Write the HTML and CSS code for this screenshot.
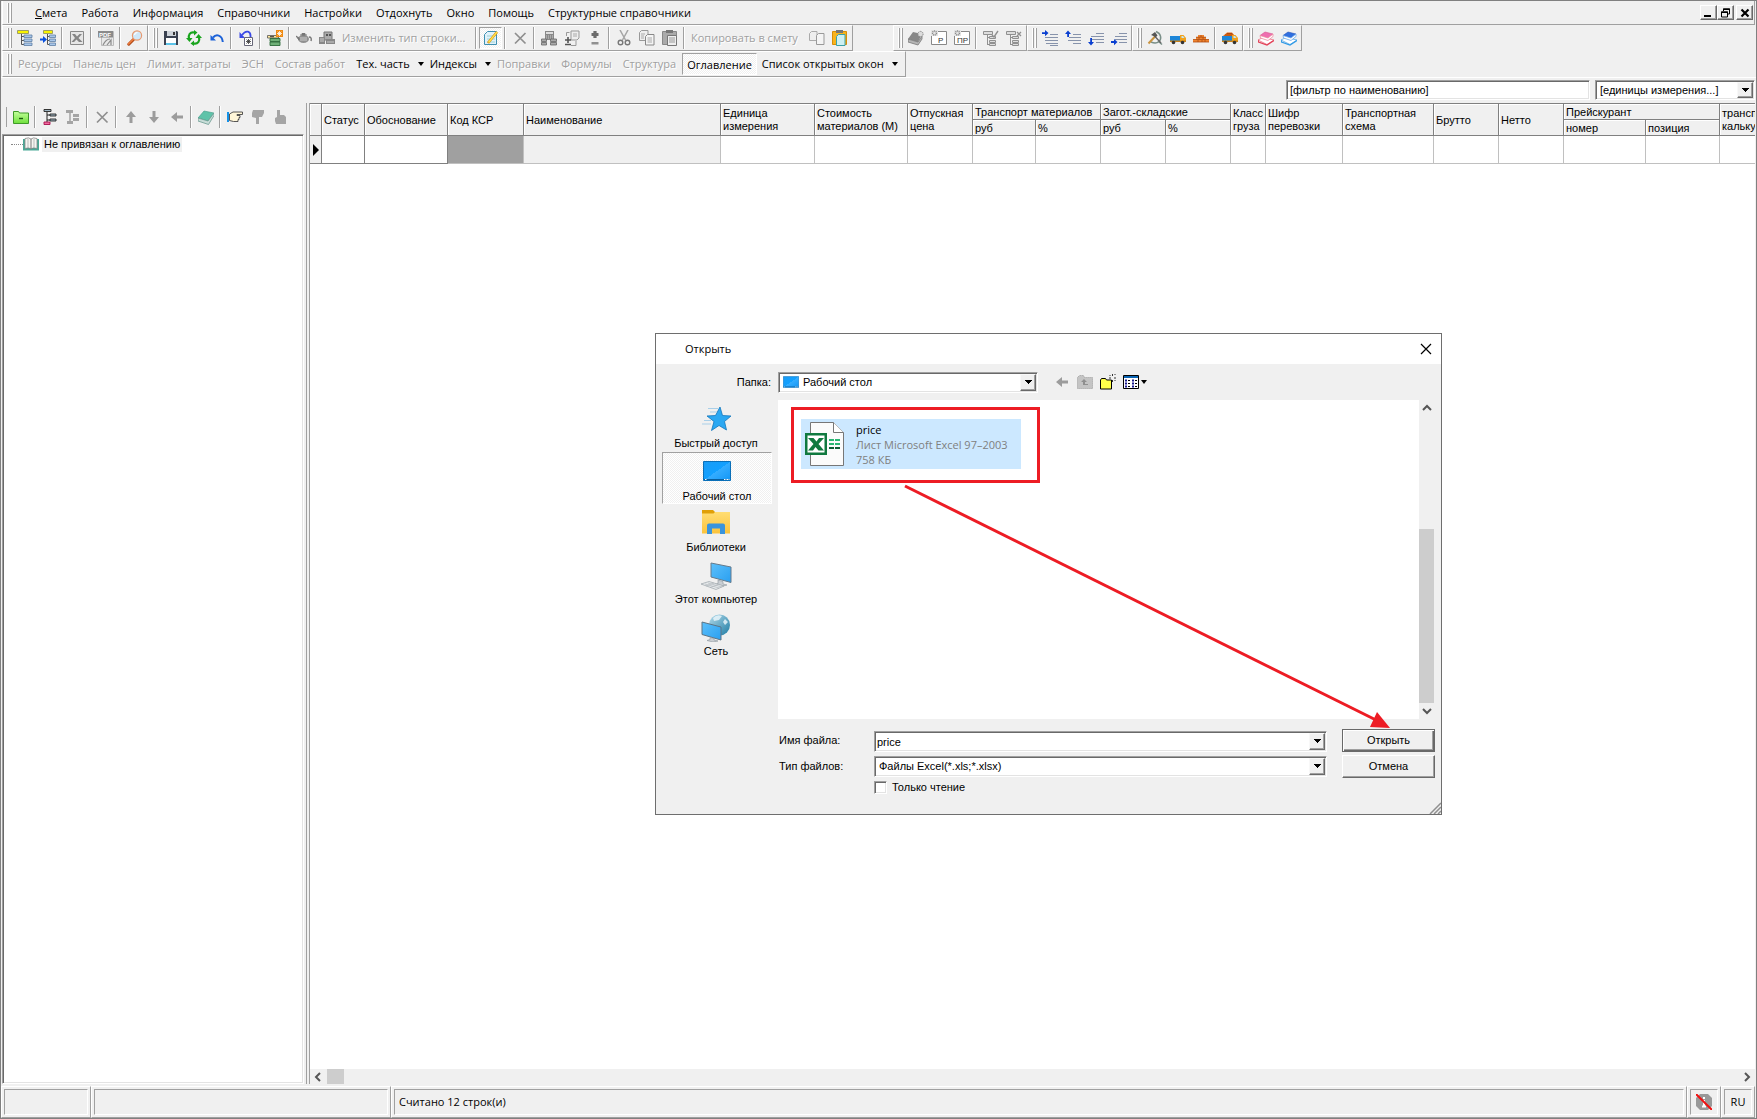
FILE: index.html
```html
<!DOCTYPE html>
<html lang="ru">
<head>
<meta charset="utf-8">
<title>Смета</title>
<link rel="stylesheet" href="styles.css">
</head>
<body>
<svg class="sprite" aria-hidden="true">
  <defs>
    <linearGradient id="gBlue" x1="0" y1="0" x2="1" y2="1"><stop offset="0" stop-color="#1a9cf5"/><stop offset=".5" stop-color="#12a0ff"/><stop offset=".5" stop-color="#35adff"/><stop offset="1" stop-color="#1296f5"/></linearGradient>
    <linearGradient id="gSky" x1="0" y1="0" x2="1" y2="1"><stop offset="0" stop-color="#5cc0fb"/><stop offset="1" stop-color="#2a9ff0"/></linearGradient>
    <linearGradient id="gFolder" x1="0" y1="0" x2="0" y2="1"><stop offset="0" stop-color="#ffdd73"/><stop offset="1" stop-color="#fbc33c"/></linearGradient>
    <linearGradient id="gGlobe" x1="0" y1="0" x2="1" y2="1"><stop offset="0" stop-color="#b5dcec"/><stop offset="1" stop-color="#1d7ba3"/></linearGradient>
    <linearGradient id="gGreen" x1="0" y1="0" x2="0" y2="1"><stop offset="0" stop-color="#c4ff9c"/><stop offset="1" stop-color="#6fe03c"/></linearGradient>
  </defs>
  <symbol id="i-tree" viewBox="0 0 16 16"><path d="M.500.500h11v3H.500z" fill="#f8f400" stroke="#8a8a5a" stroke-width=".8"/><path d="M4.500 4v10.500M4.500 6.500h3M4.500 10.500h3M4.500 14.500h3" fill="none" stroke="#555"/><path d="M7 5h8v2.500H7zM7 9h8v2.500H7zM7 13h8v2.500H7z" fill="#a9c7ea" stroke="#5e7fa5" stroke-width=".8"/></symbol>
  <symbol id="i-tree-in" viewBox="0 0 16 16"><path d="M3.500.500h9v3h-9z" fill="#f8f400" stroke="#8a8a5a" stroke-width=".8"/><path d="M7.500 4v10.500M7.500 6.500h2M7.500 10.500h2M7.500 14.500h2" fill="none" stroke="#555"/><path d="M9.500 5h6v2.500h-6zM9.500 9h6v2.500h-6zM9.500 13h6v2.500h-6z" fill="#a9c7ea" stroke="#5e7fa5" stroke-width=".8"/><path d="M0 8.500h3V6l4 3.500L3 13v-2.500H0z" fill="#0a50dd"/></symbol>
  <symbol id="i-excel" viewBox="0 0 16 16"><path d="M1.500 1.500h13v13h-13z" fill="#e6e6e6" stroke="#8a8a8a"/><path d="M3 4h3l2 2.500L10.500 4H13L9.500 8l4 4H10L7.500 9.500 5 12H2.500L6 8z" fill="#858585"/></symbol>
  <symbol id="i-zoom" viewBox="0 0 16 16"><path d="M1.800 14.200 6.500 9.500" stroke="#b04a18" stroke-width="3" stroke-linecap="round"/><path d="M1.500 13.800 6.500 9" stroke="#ec7a3c" stroke-width="1.600" stroke-linecap="round"/><circle cx="10" cy="5.500" r="4.600" fill="#cfe8fa" stroke="#e89a70" stroke-width="1.200"/><path d="M7.500 5a3 3 0 0 1 3-2.500" fill="none" stroke="#fff" stroke-width="1.200"/></symbol>
  <symbol id="i-save" viewBox="0 0 16 16"><path d="M1 1h13l1 1v13H1z" fill="#3a4150"/><path d="M4 1h9v5H4z" fill="#cfd4da"/><path d="M10 2h2v3h-2z" fill="#333"/><path d="M3 8h10v7H3z" fill="#fff"/><path d="M3 13h10v2H3z" fill="#5cc3e8"/></symbol>
  <symbol id="i-refresh" viewBox="0 0 16 16"><path d="M8.500 2.500C4 1.500 2 5 3 9M7.500 13.500c4.500 1 6.500-2.500 5.500-6.500" fill="none" stroke="#19a41d" stroke-width="2.200"/><path d="M0 8h6.500l-3 4zM16 8H9.500l3-4zM8 5.500V0l3.500 2.500zM8 10.500V16l-3.500-2.500z" fill="#19a41d"/></symbol>
  <symbol id="i-undo" viewBox="0 0 16 16"><path d="M4 7.500C7 4 13 4.500 13.800 12" fill="none" stroke="#1c62d8" stroke-width="2"/><path d="M1.500 5v5.500H7z" fill="#1c62d8"/></symbol>
  <symbol id="i-undo-page" viewBox="0 0 16 16"><path d="M4 5C8-.5 13 1 12.500 7" fill="none" stroke="#3a49e6" stroke-width="1.800"/><path d="M1.500 2v6H7z" fill="#3a49e6"/><path d="M6.500 7.500h8v8h-8z" fill="#fff" stroke="#667"/><path d="m8.500 9.500 4 4m0-4-4 4m2-4.500v5m-2.500-2.500h5" stroke="#333" stroke-width=".8"/></symbol>
  <symbol id="i-stack" viewBox="0 0 16 16"><path d="M.5 5.500h11V8H.500z" fill="#ffe9a0" stroke="#555" stroke-width=".8"/><path d="M3 8.500h10v3H3zM3 12h10v3.500H3z" fill="#6fb077" stroke="#2d6b3a" stroke-width=".9"/><path d="M3 6.700h4" stroke="#333"/><path d="M9 0h7v7H9z" fill="#f08a10"/><path d="M12.500 1v5M10 3.500h5M10.700 1.700l3.600 3.600m0-3.600-3.600 3.600" stroke="#fff" stroke-width=".8"/></symbol>
  <symbol id="i-kettle" viewBox="0 0 16 16"><ellipse cx="7.500" cy="9" rx="5.500" ry="4" fill="#909090"/><path d="M0 6l3 2v2zM4 5h7M6 3.500h3v1.500H6z" fill="#777" stroke="#777"/><path d="M13 7q3 0 2 4" fill="none" stroke="#777" stroke-width="1.400"/><path d="M4 8h7M4 10h7" stroke="#ccc"/></symbol>
  <symbol id="i-machine" viewBox="0 0 16 16"><path d="M5 2h8v8H5z" fill="#aaa" stroke="#777"/><path d="M7 4h2v2H7zm3 0h2v2h-2z" fill="#555"/><path d="M0 7h6v7H0zM7 9h9v5H7z" fill="#888"/><path d="M1 9h4M1 11h4M8 12h7" stroke="#ccc"/></symbol>
  <symbol id="i-note" viewBox="0 0 16 16"><path d="M4.500 1.500h9v13h-12v-10z" fill="#dff1fb" stroke="#3f8fb0"/><path d="M4 6h8M4 9h8M4 12h8" stroke="#8cc" stroke-width=".8"/><path d="M5 13 14 2" stroke="#d98a10" stroke-width="2.600"/><path d="M5.500 12.500 14 2" stroke="#ffe44a" stroke-width="1.400"/></symbol>
  <symbol id="i-x" viewBox="0 0 16 16"><path d="m3 3 10.500 10.500m0-10.500L3 13.500" stroke="#8f8f8f" stroke-width="1.700"/></symbol>
  <symbol id="i-calc" viewBox="0 0 16 16"><path d="M4 1h9v9H4z" fill="#888"/><path d="M5 2h7v2H5z" fill="#ddd"/><path d="M5 6h7M5 8h7" stroke="#ccc" stroke-dasharray="1 1"/><path d="M.5 9h5v2.500h-5zM.500 12.500h5V15h-5zM9.500 9h6v2.500h-6zM9.500 12.500h6V15h-6z" fill="#aaa" stroke="#666" stroke-width=".8"/></symbol>
  <symbol id="i-page-plus" viewBox="0 0 16 16"><path d="M7 1h8v7l-2 2H7z" fill="#eee" stroke="#999"/><path d="M2.500 6V2.500h3M7 15.500h5V11" fill="none" stroke="#999"/><path d="M9 4h4M9 6h4" stroke="#aaa"/><path d="M4 7v6M1 10h6M1 14.500h6" stroke="#555" stroke-width="1.600"/></symbol>
  <symbol id="i-plusminus" viewBox="0 0 16 16"><path d="M8 1v7M4.500 4.500h7" stroke="#6c6c6c" stroke-width="3.200"/><path d="M4.500 12h7v2.500h-7z" fill="#909090"/></symbol>
  <symbol id="i-cut" viewBox="0 0 16 16"><path d="M4 0l5.500 10M12 0 6.500 10" stroke="#a5a5a5" stroke-width="1.500"/><circle cx="4.500" cy="12.500" r="2.300" fill="none" stroke="#777" stroke-width="1.400"/><circle cx="11.500" cy="12.500" r="2.300" fill="none" stroke="#777" stroke-width="1.400"/></symbol>
  <symbol id="i-copy" viewBox="0 0 16 16"><path d="M.5 2.500 2.500.500H9v10H.500z" fill="#eee" stroke="#999"/><path d="M6.500 6.500l2-2H15v10.500H6.500z" fill="#f4f4f4" stroke="#888"/><path d="M2 4h4M2 6h3M2 8h3M8.500 8H13M8.500 10H13M8.500 12H13" stroke="#aaa"/></symbol>
  <symbol id="i-paste" viewBox="0 0 16 16"><path d="M.500 1.500h14v13H.500z" fill="#aaa" stroke="#888"/><path d="M4 0h7v3H4z" fill="#777"/><path d="M5.500 5.500h9v10h-9z" fill="#eee" stroke="#777"/><path d="M7 8h6M7 10h6M7 12h6" stroke="#999"/></symbol>
  <symbol id="i-copy2" viewBox="0 0 16 16"><path d="M.500 3.500 2.500 1.500H8v9H.500z" fill="#eee" stroke="#aaa"/><path d="M7.500 5.500l2-2H15v11H7.500z" fill="#f4f4f4" stroke="#999"/></symbol>
  <symbol id="i-paste2" viewBox="0 0 16 16"><path d="M.500 1.500h14v13H.500z" fill="#f8b31c" stroke="#d98d06"/><path d="M4 0h7v3H4z" fill="#777"/><path d="M4.500 6.500l2-2H13v11H4.500z" fill="#cdeff2" stroke="#3aa0a8"/></symbol>
  <symbol id="i-book-gear" viewBox="0 0 16 16"><path d="M0 9 5 2l9 2-4 8z" fill="#888"/><path d="m0 9 10 3 4-6v3l-4 6-10-3z" fill="#b5b5b5" stroke="#777" stroke-width=".8"/><circle cx="12.500" cy="4" r="2.600" fill="#ddd" stroke="#888" stroke-dasharray="1.500 .8"/></symbol>
  <symbol id="i-tree-check" viewBox="0 0 16 16"><path d="M.500 1.500h9v3h-9zM6.500 6.500h6v2h-6zM6.500 10.500h6v2h-6zM6.500 13.500h6v2h-6z" fill="#ddd" stroke="#909090"/><path d="M4.500 5v10M4.500 7.500h2M4.500 14.500h2" stroke="#909090"/><path d="m9 5 2 2 4-6" fill="none" stroke="#909090" stroke-width="1.400"/></symbol>
  <symbol id="i-tree-x" viewBox="0 0 16 16"><path d="M.500 1.500h9v3h-9zM6.500 6.500h6v2h-6zM6.500 10.500h6v2h-6zM6.500 13.500h6v2h-6z" fill="#ddd" stroke="#909090"/><path d="M4.500 5v10M4.500 7.500h2M4.500 14.500h2" stroke="#909090"/><path d="m11 2 4 4m0-4-4 4" stroke="#909090" stroke-width="1.300"/></symbol>
  <symbol id="i-line-r" viewBox="0 0 16 16"><path d="M8 4.500h8M3 7.500h13M3 10.500h13M4 13.500h12M8 15.500h8" stroke="#8793ab"/><path d="M0 2.200h3V0l3.500 3L3 6.200V4H0z" fill="#0a3fd0"/></symbol>
  <symbol id="i-line-u" viewBox="0 0 16 16"><path d="M8 4.500h8M4 7.500h12M3 10.500h13M8 13.500h8" stroke="#8793ab"/><path d="M2.200 7V4H0L3 .500 6 4H4v3z" fill="#0a3fd0"/></symbol>
  <symbol id="i-line-d" viewBox="0 0 16 16"><path d="M8 3.500h8M3 6.500h13M3 9.500h13M8 12.500h8" stroke="#8793ab"/><path d="M2.200 8v4H0l3 3.500L6 12H4V8z" fill="#0a3fd0"/></symbol>
  <symbol id="i-line-dr" viewBox="0 0 16 16"><path d="M8 3.500h8M4 6.500h12M4 9.500h12M8 12.500h8" stroke="#8793ab"/><path d="M0 11h3V9l3.500 3L3 15.200V13H0z" fill="#0a3fd0"/></symbol>
  <symbol id="i-hammer" viewBox="0 0 16 16"><path d="M9 1.500c5 2 6 7 3 10-2 1.800-5 1.800-8 .5M11 11l4 3.500" fill="none" stroke="#7a8f88" stroke-width="1.500"/><path d="M1.500 13.500 8.500 6" stroke="#c99440" stroke-width="2"/><path d="M8 6.500 14 13" stroke="#666" stroke-width="1.400"/><path d="m4 5 4-3 2.500 3.500-2 2-2-1.500z" fill="#555"/></symbol>
  <symbol id="i-truck" viewBox="0 0 16 16"><path d="M0 6h10v5H0z" fill="#1d86d8"/><path d="M10 5h3.500L16 8v4h-6z" fill="#f0a21c"/><path d="M11.500 6H13l1.500 2h-3z" fill="#bfe4f7"/><path d="M0 10.500h16V12H0z" fill="#c98218"/><circle cx="3.500" cy="12.500" r="1.800" fill="#333"/><circle cx="12.500" cy="12.500" r="1.800" fill="#333"/></symbol>
  <symbol id="i-bricks" viewBox="0 0 16 16"><path d="M0 9.500h3V7h2V5h6v2h2v2.500h3V12H0z" fill="#ee8430"/><path d="M0 9.500h16M3 7.200h10M5 10v2M9 10v2M12 10v2M8 5v2M6 7v2M10 7v2M0 12h16" stroke="#b04c10" stroke-width=".8"/></symbol>
  <symbol id="i-truck-load" viewBox="0 0 16 16"><path d="M1 6l4-3.500h5L13 6z" fill="#e06a1c"/><path d="M3 5h8M5 3.500h5" stroke="#a84408" stroke-width=".8"/><path d="M0 6h10v5H0z" fill="#1d86d8"/><path d="M10 5h3.500L16 8v4h-6z" fill="#f0a21c"/><path d="M11.500 6H13l1.500 2h-3z" fill="#bfe4f7"/><path d="M0 10.500h16V12H0z" fill="#c98218"/><circle cx="3.500" cy="12.500" r="1.800" fill="#333"/><circle cx="12.500" cy="12.500" r="1.800" fill="#333"/></symbol>
  <symbol id="i-books-red" viewBox="0 0 16 16"><path d="M0 10 5 7.500 16 10l-7 4.500z" fill="#fff" stroke="#ef6b80" stroke-width=".8"/><path d="m0 10 .500 2L9 15l7-4.500" fill="none" stroke="#e23f55" stroke-width="1.200"/><path d="m2 5.500 5-3.500 8 2-5 4z" fill="#ee6fb0" stroke="#d9558f" stroke-width=".6"/><path d="m2 5.500.5 2.500L10 10.500l5-4V4l-5 4z" fill="#fff" stroke="#ef8aa0" stroke-width=".8"/></symbol>
  <symbol id="i-books-blue" viewBox="0 0 16 16"><path d="M0 10 5 7.500 16 10l-7 4.500z" fill="#fff" stroke="#55a7e8" stroke-width=".8"/><path d="m0 10 .500 2L9 15l7-4.500" fill="none" stroke="#2f9ae6" stroke-width="1.200"/><path d="m2 5.500 5-3.500 8 2-5 4z" fill="#2f6fe0" stroke="#2350b5" stroke-width=".6"/><path d="m2 5.500.5 2.500L10 10.500l5-4V4l-5 4z" fill="#fff" stroke="#6aa8ea" stroke-width=".8"/></symbol>
  <symbol id="i-folder-minus" viewBox="0 0 16 16"><path d="M.500 14.500v-12h5l1 1.500h9v10.500z" fill="url(#gGreen)" stroke="#3f9a28"/><path d="M6 9.500h4" stroke="#1c5c10" stroke-width="1.400"/></symbol>
  <symbol id="i-node-add" viewBox="0 0 16 16"><path d="M2 .5h7v2H2zM8 5h6v2H8zM8 10h6v2H8z" fill="#9fb6c4" stroke="#222" stroke-width=".9"/><path d="M5 3v10M5 6h3M5 11h3" stroke="#222" fill="none"/><path d="M2 13h6v2.500H2z" fill="#f06aa0" stroke="#a8104c" stroke-width=".9"/></symbol>
  <symbol id="i-node-off" viewBox="0 0 16 16"><path d="M1 1h7v3H1zM8 5h6v3H8zM8 9h6v3H8zM2 12h6v3H2z" fill="#a5a5a5"/><path d="M5 3v10" stroke="#a5a5a5" stroke-width="1.500"/></symbol>
  <symbol id="i-up" viewBox="0 0 16 16"><path d="M6.500 14V8H3l5-6 5 6H9.500v6z" fill="#9c9c9c"/></symbol>
  <symbol id="i-down" viewBox="0 0 16 16"><path d="M6.500 2v6H3l5 6 5-6H9.500V2z" fill="#9c9c9c"/></symbol>
  <symbol id="i-left" viewBox="0 0 16 16"><path d="M14 6.500H8V3L2 8l6 5V9.500h6z" fill="#9c9c9c"/></symbol>
  <symbol id="i-book" viewBox="0 0 16 16"><path d="M0 9 6 2l10 2-6 8z" fill="#5fc3a9" stroke="#3f9a88" stroke-width=".6"/><path d="m0 9 10 3 6-8v2.500L10.500 15.500 0 12z" fill="#c8ddd8" stroke="#6c9a92" stroke-width=".8"/></symbol>
  <symbol id="i-hand-r" viewBox="0 0 16 16"><path d="M0 3h2v10H0z" fill="#1592e8"/><path d="M2.500 5 6 3h9.500v2.500H10v1h3v2h-1v2h-1v2H6.500l-4-1z" fill="#fff6d8" stroke="#444" stroke-width=".9"/></symbol>
  <symbol id="i-hand-d" viewBox="0 0 16 16"><path d="M3 1h11v3l-2 4H9v7H6V9L2 8V4z" fill="#a5a5a5"/></symbol>
  <symbol id="i-hand-u" viewBox="0 0 16 16"><path d="M3 15h10V8l-2-2H7V1H4v7L2 9v3z" fill="#a5a5a5"/></symbol>
  <symbol id="i-book-open" viewBox="0 0 16 14"><path d="M0 2h16v11.500H0z" fill="#4aa896"/><path d="M2 1.500Q6 0 8 2q2-2 6-.5v10q-4-1.500-6 .5-2-2-6-.5z" fill="#f6f6f2" stroke="#888" stroke-width=".8"/><path d="M8 2v10" stroke="#777"/><path d="M5 2v9M11 2v9" stroke="#bbb"/></symbol>
  <symbol id="i-dlg-up" viewBox="0 0 16 16"><path d="M.500 14.500v-11l2-2h4l1 2h8v11z" fill="#c4c4c4" stroke="#9c9c9c" stroke-dasharray="1 1"/><path d="M6 11V8H4l3-3 3 3H8v2h3v1z" fill="#8f8f8f"/></symbol>
  <symbol id="i-dlg-new" viewBox="0 0 16 16"><path d="M.500 15v-9l1-1.500h4l1 1.500h5v9z" fill="#ffff4a" stroke="#000"/><path d="M12.500 0v2M12.500 6v2M9 4h2M14 4h2M9.500 1l1 1M14.500 1l1-1M14.500 6l1 1" stroke="#333"/></symbol>
  <symbol id="i-dlg-view" viewBox="0 0 16 16"><path d="M.500 1.500h15v13H.500z" fill="#fff" stroke="#000"/><path d="M1 2h14v2H1z" fill="#0a64b4"/><path d="M2 6.500h2M2 9.500h2M2 12.500h2M9 6.500h2M9 9.500h2M9 12.500h2" stroke="#1a1a90" stroke-width="1.800"/><path d="M5 6.500h2M5 9.500h2M5 12.500h2M12 6.500h2M12 9.500h2M12 12.500h2" stroke="#000"/></symbol>
  <symbol id="i-screen" viewBox="0 0 28 20"><path d="M.500.500h27v19H.500z" fill="url(#gBlue)" stroke="#0a6fb8"/><path d="M1 18h26v1H1z" fill="#0a5f9e"/><path d="M2 18.500h1.500M21 18.500h1.500M23.500 18.500h1.500M25.500 18.500h1" stroke="#fff"/></symbol>
  <symbol id="i-star" viewBox="0 0 32 26"><path d="M20 1l2.500 8.500 8.500.5-6.500 5.500 2 8.500-7.500-4.500-7.500 5L14 15.500 7 10l8.500-.5z" fill="#2ba8f2" stroke="#1176bd" stroke-width=".8"/><path d="M8 2.500h10M10 6h7M4 14.500h7M2 18h9" stroke="#a9cfe8" stroke-width="1"/></symbol>
  <symbol id="i-lib" viewBox="0 0 28 24"><path d="M0 0h11l2 2v3H0z" fill="#e0a008"/><path d="M0 3.500h11.500L13 2h15v21.500H0z" fill="url(#gFolder)"/><path d="M5 24V15.500a2 2 0 0 1 2-2h14a2 2 0 0 1 2 2V24h-5v-5.500h-8V24z" fill="#3a94dc"/></symbol>
  <symbol id="i-pc" viewBox="0 0 32 28"><path d="M11 1l20 4v15.500L11 15z" fill="url(#gSky)" stroke="#667b8c"/><path d="m18 18 5 1.500v2.500l4 1-6 1.500-6-2 3-1z" fill="#c9ced3" stroke="#8c959c" stroke-width=".6"/><path d="m1 22 8-2.500 15 4.500-8 3.500z" fill="#e7eaec" stroke="#9aa2a8" stroke-width=".7"/><path d="m5 22 14 4M8 21l14 4M6 24l8-3M10 25.500l8-3" stroke="#aab0b5" stroke-width=".6"/></symbol>
  <symbol id="i-net" viewBox="0 0 30 28"><circle cx="18.500" cy="11" r="10.500" fill="url(#gGlobe)"/><path d="M12 4q4-4 9-2l-3 4-5 1zM24 5l3 3-3 3-2-3z" fill="#eef8fc" opacity=".8"/><path d="m1 8 19 5v13L1 20.500z" fill="url(#gSky)" stroke="#5c7485"/><path d="M9 23.500v2l-3 1 6 1.500 5-1-4-1v-1.500z" fill="#c9ced3" stroke="#8c959c" stroke-width=".6"/></symbol>
  <symbol id="i-xls" viewBox="0 0 40 44"><path d="M5.500.500h23l10 10v33h-33z" fill="#fbfbfb" stroke="#777"/><path d="M28.500.500v10h10" fill="#fff" stroke="#777"/><path d="M24 18h5M30 18h5M24 22h5M30 22h5" stroke="#2ab673" stroke-width="2"/><path d="M24 26h5M30 26h5" stroke="#0e5c34" stroke-width="2"/><path d="M0 11h22v22H0z" fill="#10793f"/><path d="M2.500 13.500h17v17h-17z" fill="#fff"/><path d="M3 16h5.500l3 3.500L14 16h5l-5.500 6 5.500 6.500h-5.500L10.500 25 8 28.500H3L8.500 22z" fill="#10793f"/></symbol>
  <symbol id="i-info-off" viewBox="0 0 16 16"><path d="M4 0h8l4 4v8l-4 4H4l-4-4V4z" fill="#999"/><path d="M8 3v2M6.500 7H8v5M6 12.500h4" fill="none" stroke="#fff" stroke-width="2"/><path d="m0 0 16 16" stroke="#f01010" stroke-width="2"/></symbol>
</svg>

<div class="window">
  <header class="menubar">
    <span class="grip"></span>
    <nav class="menu">
      <button><u>С</u>мета</button><button>Работа</button><button>Информация</button><button>Справочники</button><button>Настройки</button><button>Отдохнуть</button><button>Окно</button><button>Помощь</button><button>Структурные справочники</button>
    </nav>
    <div class="winbtns">
      <button aria-label="Свернуть"><svg viewBox="0 0 12 10"><path d="M1 7h7v2H1z"/></svg></button><button aria-label="Восстановить"><svg viewBox="0 0 12 10"><path d="M3.500 3V1h6v5H8M1.500 4h6v5h-6z" fill="none" stroke="#000"/><path d="M3 .5h7v1.500H3zM1 3.500h7V5H1z"/></svg></button><button class="last" aria-label="Закрыть"><svg viewBox="0 0 12 10"><path d="m2.500 1.500 7 7m0-7-7 7" stroke="#000" stroke-width="2.200"/></svg></button>
    </div>
  </header>

  <div class="bandrow">
    <div class="band" role="toolbar"><span class="grip"></span>
      <button class="tb" aria-label="Дерево"><svg><use href="#i-tree"/></svg></button><button class="tb" aria-label="Вставить в дерево"><svg><use href="#i-tree-in"/></svg></button><i class="sep"></i>
      <button class="tb" aria-label="Excel" disabled><svg><use href="#i-excel"/></svg></button><i class="sep"></i>
      <button class="tb" aria-label="Экспорт" disabled><svg viewBox="0 0 16 16"><path d="M3.500 1.500h12v14h-12z" fill="#e8e8e8" stroke="#bbb"/><path d="M0 1h15v6.500H0z" fill="#8a8a8a"/><text x="1" y="6.500" font-size="6" font-weight="bold" fill="#fff">PDF</text><path d="M5 15q3-6 7-6M9 15l4-5v5" fill="none" stroke="#8a8a8a" stroke-width="1.200"/></svg></button><i class="sep"></i>
      <button class="tb" aria-label="Поиск"><svg><use href="#i-zoom"/></svg></button>
    </div>
    <div class="band" role="toolbar"><span class="grip"></span>
      <button class="tb" aria-label="Сохранить"><svg><use href="#i-save"/></svg></button><button class="tb" aria-label="Обновить"><svg><use href="#i-refresh"/></svg></button><button class="tb" aria-label="Отменить"><svg><use href="#i-undo"/></svg></button><i class="sep"></i>
      <button class="tb" aria-label="Пересчитать"><svg><use href="#i-undo-page"/></svg></button><i class="sep"></i>
      <button class="tb" aria-label="Новая строка"><svg><use href="#i-stack"/></svg></button><i class="sep"></i>
      <button class="tb" aria-label="Материал" disabled><svg><use href="#i-kettle"/></svg></button><button class="tb" aria-label="Машина" disabled><svg><use href="#i-machine"/></svg></button><button class="tb change" disabled>Изменить тип строки...</button><i class="sep"></i>
      <button class="tb pressed" aria-label="Примечание"><svg><use href="#i-note"/></svg></button><i class="sep"></i>
      <button class="tb" aria-label="Удалить" disabled><svg><use href="#i-x"/></svg></button><i class="sep"></i>
      <button class="tb" aria-label="Расчёт" disabled><svg><use href="#i-calc"/></svg></button><button class="tb" aria-label="Добавить" disabled><svg><use href="#i-page-plus"/></svg></button><button class="tb" aria-label="Плюс-минус" disabled><svg><use href="#i-plusminus"/></svg></button><i class="sep"></i>
      <button class="tb" aria-label="Вырезать" disabled><svg><use href="#i-cut"/></svg></button><button class="tb" aria-label="Копировать" disabled><svg><use href="#i-copy"/></svg></button><button class="tb" aria-label="Вставить" disabled><svg><use href="#i-paste"/></svg></button><i class="sep"></i>
      <button class="tb copyto" disabled>Копировать в смету</button><button class="tb" aria-label="Копия" disabled><svg><use href="#i-copy2"/></svg></button><button class="tb" aria-label="Из буфера"><svg><use href="#i-paste2"/></svg></button>
    </div>
    <div class="band apart" role="toolbar"><span class="grip"></span>
      <button class="tb" aria-label="Справочник" disabled><svg><use href="#i-book-gear"/></svg></button><button class="tb" aria-label="Раздел" disabled><svg viewBox="0 0 16 16"><path d="M.500 1.500h15v13H.500z" fill="#fff" stroke="#888"/><path d="M0 0h7v6H0z" fill="#e4e4e4"/><circle cx="3.500" cy="3" r="2" fill="none" stroke="#888" stroke-dasharray="1 .6" stroke-width="1.400"/><text x="7" y="13" font-size="8" fill="#333">Р</text></svg></button><button class="tb" aria-label="Подраздел" disabled><svg viewBox="0 0 16 16"><path d="M.500 1.500h15v13H.500z" fill="#fff" stroke="#888"/><path d="M0 0h7v6H0z" fill="#e4e4e4"/><circle cx="3.500" cy="3" r="2" fill="none" stroke="#888" stroke-dasharray="1 .6" stroke-width="1.400"/><text x="3" y="13" font-size="8" fill="#333">ПР</text></svg></button><i class="sep"></i>
      <button class="tb" aria-label="Отметить" disabled><svg><use href="#i-tree-check"/></svg></button><button class="tb" aria-label="Снять" disabled><svg><use href="#i-tree-x"/></svg></button>
    </div>
    <div class="band" role="toolbar"><span class="grip"></span>
      <button class="tb" aria-label="Вправо"><svg><use href="#i-line-r"/></svg></button><button class="tb" aria-label="Вверх"><svg><use href="#i-line-u"/></svg></button><button class="tb" aria-label="Вниз"><svg><use href="#i-line-d"/></svg></button><button class="tb" aria-label="В конец"><svg><use href="#i-line-dr"/></svg></button>
    </div>
    <div class="band" role="toolbar"><span class="grip"></span>
      <button class="tb" aria-label="Труд"><svg><use href="#i-hammer"/></svg></button><button class="tb" aria-label="Машины"><svg><use href="#i-truck"/></svg></button><button class="tb" aria-label="Материалы"><svg><use href="#i-bricks"/></svg></button><i class="sep"></i>
      <button class="tb" aria-label="Перевозка"><svg><use href="#i-truck-load"/></svg></button>
    </div>
    <div class="band" role="toolbar"><span class="grip"></span>
      <button class="tb" aria-label="Красные книги"><svg><use href="#i-books-red"/></svg></button><button class="tb" aria-label="Синие книги"><svg><use href="#i-books-blue"/></svg></button>
    </div>
  </div>

  <div class="bandrow">
    <div class="band texts" role="toolbar"><span class="grip"></span>
      <button class="tx" disabled>Ресурсы</button><button class="tx" disabled>Панель цен</button><button class="tx" disabled>Лимит. затраты</button><button class="tx" disabled>ЭСН</button><button class="tx" disabled>Состав работ</button><button class="tx drop">Тех. часть</button><button class="tx drop">Индексы</button><button class="tx" disabled>Поправки</button><button class="tx" disabled>Формулы</button><button class="tx" disabled>Структура</button><button class="tx pressed">Оглавление</button><button class="tx drop">Список открытых окон</button>
    </div>
  </div>

  <div class="filters">
    <input class="field filter" type="text" aria-label="Фильтр по наименованию" value="[фильтр по наименованию]">
    <span class="combo units"><select aria-label="Единицы измерения"><option>[единицы измерения...]</option></select></span>
  </div>

  <main class="work">
    <aside class="side">
      <div class="sidebar-tools" role="toolbar"><i class="grip1"></i>
        <button class="tb" aria-label="Свернуть"><svg><use href="#i-folder-minus"/></svg></button><i class="sep"></i>
        <button class="tb" aria-label="Добавить узел"><svg><use href="#i-node-add"/></svg></button><button class="tb" aria-label="Добавить подузел" disabled><svg><use href="#i-node-off"/></svg></button><i class="sep"></i>
        <button class="tb" aria-label="Удалить" disabled><svg><use href="#i-x"/></svg></button><i class="sep"></i>
        <button class="tb" aria-label="Вверх" disabled><svg><use href="#i-up"/></svg></button><button class="tb" aria-label="Вниз" disabled><svg><use href="#i-down"/></svg></button><button class="tb" aria-label="Влево" disabled><svg><use href="#i-left"/></svg></button><i class="sep"></i>
        <button class="tb" aria-label="Книга"><svg><use href="#i-book"/></svg></button><i class="sep"></i>
        <button class="tb" aria-label="Привязать"><svg><use href="#i-hand-r"/></svg></button><button class="tb" aria-label="Ниже" disabled><svg><use href="#i-hand-d"/></svg></button><button class="tb" aria-label="Выше" disabled><svg><use href="#i-hand-u"/></svg></button>
      </div>
      <ul class="tree"><li><i class="dots"></i><svg><use href="#i-book-open"/></svg><span>Не привязан к оглавлению</span></li></ul>
    </aside>
    <section class="grid">
      <div class="grid-view">
        <table>
          <colgroup><col class="w12"><col class="w43"><col class="w83"><col class="w76"><col class="w197"><col class="w94"><col class="w93"><col class="w65"><col class="w63"><col class="w65"><col class="w65"><col class="w65"><col class="w35"><col class="w77"><col class="w91"><col class="w65"><col class="w65"><col class="w82"><col class="w74"><col class="w80"></colgroup>
          <thead>
            <tr><th rowspan="2"></th><th rowspan="2">Статус</th><th rowspan="2">Обоснование</th><th rowspan="2">Код КСР</th><th rowspan="2">Наименование</th><th rowspan="2">Единица<br>измерения</th><th rowspan="2">Стоимость<br>материалов (М)</th><th rowspan="2">Отпускная<br>цена</th><th colspan="2">Транспорт материалов</th><th colspan="2">Загот.-складские</th><th rowspan="2">Класс<br>груза</th><th rowspan="2">Шифр<br>перевозки</th><th rowspan="2">Транспортная<br>схема</th><th rowspan="2">Брутто</th><th rowspan="2">Нетто</th><th colspan="2">Прейскурант</th><th rowspan="2">трансп.<br>калькуляция</th></tr>
            <tr><th>руб</th><th>%</th><th>руб</th><th>%</th><th>номер</th><th>позиция</th></tr>
          </thead>
          <tbody>
            <tr><td class="mark"><svg viewBox="0 0 6 12"><path d="M0 0l6 6-6 6z"/></svg></td><td class="dark"></td><td class="dark"></td><td class="code"></td><td class="name"></td><td></td><td></td><td></td><td></td><td></td><td></td><td></td><td></td><td></td><td></td><td></td><td></td><td></td><td></td><td></td></tr>
          </tbody>
        </table>
      </div>
      <div class="hscroll"><svg viewBox="0 0 16 16"><path d="M10 4 6 8l4 4"/></svg><i></i><svg class="end" viewBox="0 0 16 16"><path d="m6 4 4 4-4 4"/></svg></div>
    </section>
  </main>

  <footer class="status">
    <div class="cell s1"><span></span></div><div class="cell s2"><span></span></div><div class="cell s3"><span>Считано 12 строк(и)</span></div><div class="cell s4"><span><svg><use href="#i-info-off"/></svg></span></div><div class="cell s4"><span>RU</span></div>
  </footer>
</div>

<div class="dialog" role="dialog" aria-labelledby="dlg-title">
  <div class="dlg-title"><span id="dlg-title">Открыть</span><button aria-label="Закрыть"><svg viewBox="0 0 12 12"><path d="m1 1 10 10M11 1 1 11" stroke="#000" stroke-width="1.200"/></svg></button></div>
  <div class="dlg-folder">
    <label for="folder">Папка:</label>
    <span class="combo folder"><svg><use href="#i-screen"/></svg><select id="folder"><option>Рабочий стол</option></select></span>
    <div class="dlg-tools">
      <button class="tb" aria-label="Назад" disabled><svg><use href="#i-left"/></svg></button><button class="tb" aria-label="На уровень вверх" disabled><svg><use href="#i-dlg-up"/></svg></button><button class="tb" aria-label="Новая папка"><svg><use href="#i-dlg-new"/></svg></button><button class="tb view" aria-label="Вид"><svg><use href="#i-dlg-view"/></svg></button>
    </div>
  </div>
  <div class="dlg-main">
    <nav class="places">
      <button><svg class="p-star"><use href="#i-star"/></svg>Быстрый доступ</button>
      <button class="pressed"><svg class="p-screen"><use href="#i-screen"/></svg>Рабочий стол</button>
      <button><svg class="p-lib"><use href="#i-lib"/></svg>Библиотеки</button>
      <button><svg class="p-pc"><use href="#i-pc"/></svg>Этот компьютер</button>
      <button><svg class="p-net"><use href="#i-net"/></svg>Сеть</button>
    </nav>
    <div class="files">
      <div class="file"><svg><use href="#i-xls"/></svg><p><b>price</b><br>Лист Microsoft Excel 97–2003<br>758 КБ</p></div>
    </div>
    <div class="vscroll"><svg viewBox="0 0 16 16"><path d="m4 10 4-4 4 4"/></svg><i></i><svg viewBox="0 0 16 16"><path d="m4 6 4 4 4-4"/></svg></div>
  </div>
  <form class="dlg-form" onsubmit="return false">
    <label for="fname">Имя файла:</label>
    <span class="combo name-box"><input id="fname" type="text" value="price"></span>
    <button class="btn default">Открыть</button>
    <label for="ftype">Тип файлов:</label>
    <span class="combo"><select id="ftype"><option>Файлы Excel(*.xls;*.xlsx)</option></select></span>
    <button class="btn" type="button">Отмена</button>
    <label class="check"><input type="checkbox">Только чтение</label>
  </form>
  <svg class="resize" viewBox="0 0 12 12"><path d="M1 12 12 1M5 12l7-7M9 12l3-3" stroke="#909090" stroke-width="1.500"/></svg>
  <svg class="marks" viewBox="0 0 786 482"><path d="M136.500 74.500h246v73h-246z" fill="none" stroke="#ed1c24" stroke-width="3"/><path d="M249 152 720 386" stroke="#ed1c24" stroke-width="3"/><path d="m721 378-7 15 20 1z" fill="#ed1c24"/></svg>
</div>
</body>
</html>
```
FILE: styles.css
```css
*, *::before, *::after { box-sizing: border-box; }
html, body { height: 100%; margin: 0; }
body {
  position: relative;
  overflow: hidden;
  background: #f0f0f0;
  color: #000;
  font: 11px/16px "Open Sans", "Noto Sans", sans-serif;
}
button, input, select { font: inherit; color: inherit; margin: 0; }
button { border: 0; padding: 0; background: none; white-space: nowrap; }
button:disabled { color: #a0a0a0; text-shadow: 1px 1px 0 #fff; }
.sprite { position: absolute; width: 0; height: 0; }

.window {
  display: flex;
  flex-direction: column;
  height: 100%;
  border: 1px solid #808080;
  overflow: hidden;
}

/* menu */
.menubar {
  display: flex;
  align-items: center;
  flex: none;
  height: 24px;
  margin: 0 1px;
  border: 1px solid #a0a0a0;
  border-width: 0 1px 1px 0;
  border-left: 1px solid #fff;
}
.grip {
  flex: none;
  align-self: center;
  width: 5px;
  height: 20px;
  margin: 0 1px 0 4px;
  background: linear-gradient(90deg, #fff 1px, #a0a0a0 1px 2px, transparent 2px 3px, #fff 3px 4px, #a0a0a0 4px);
}
.menu { display: flex; flex: 1; margin-left: 15px; }
.menu button { padding: 0 7px; }
.winbtns { display: flex; margin-right: 1px; }
.winbtns button {
  display: flex;
  align-items: center;
  justify-content: center;
  width: 17px;
  height: 15px;
  border: 1px solid;
  border-color: #fff #696969 #696969 #fff;
  box-shadow: inset -1px -1px #a0a0a0;
}
.winbtns .last { margin-left: 2px; }
.winbtns svg { width: 12px; height: 10px; }

/* toolbars */
.bandrow { display: flex; flex: none; height: 26px; padding-left: 1px; }
.band {
  display: flex;
  align-items: center;
  padding-right: 1px;
  border: 1px solid;
  border-color: #fff #a0a0a0 #a0a0a0 #fff;
}
.band.apart { margin-left: 40px; }
.band.texts { padding-right: 6px; }
.tb {
  display: flex;
  align-items: center;
  justify-content: center;
  flex: none;
  width: 23px;
  height: 22px;
}
.tb svg { width: 16px; height: 16px; font-family: "Liberation Sans", Arial, sans-serif; text-shadow: none; }
.tb.change, .tb.copyto { justify-content: flex-start; padding-left: 4px; }
.tb.change { width: 135px; }
.tb.copyto { width: 118px; }
.sep {
  flex: none;
  width: 6px;
  height: 22px;
  background: linear-gradient(90deg, transparent 2px, #a0a0a0 2px 3px, #fff 3px 4px, transparent 4px);
}
.pressed {
  border: 1px solid;
  border-color: #a0a0a0 #fff #fff #a0a0a0;
  background: repeating-conic-gradient(#fff 0 25%, #f0f0f0 0 50%) 0 0 / 2px 2px;
}
.tx { height: 22px; padding: 0 6px 0 5px; }
.tx.pressed { padding: 1px 4px 0; }
.drop { display: flex; align-items: center; padding: 0 1px 0 5px; gap: 8px; }
.drop::after, .view::after {
  content: "";
  border: 3px solid transparent;
  border-top: 4px solid #000;
  border-bottom: 0;
}

/* filters */
.filters {
  display: flex;
  justify-content: flex-end;
  align-items: flex-start;
  flex: none;
  gap: 5px;
  height: 26px;
  padding: 2px 1px 0 0;
  border-top: 1px solid #fff;
  font: 11px/14px "Liberation Sans", Arial, sans-serif;
}
.field, .combo {
  height: 20px;
  border: 1px solid;
  border-color: #a0a0a0 #fff #fff #a0a0a0;
  box-shadow: inset 1px 1px #696969, inset -1px -1px #e3e3e3;
  background: #fff;
}
.field { padding: 1px 3px; }
.filter { width: 304px; }
.units { width: 160px; }
.combo { position: relative; display: flex; align-items: center; padding: 2px; }
.combo select, .combo input {
  flex: 1;
  min-width: 0;
  height: 100%;
  padding: 0 18px 0 2px;
  border: 0;
  appearance: none;
  background: none;
  outline: 0;
}
.combo::after {
  content: "";
  position: absolute;
  top: 1px;
  right: 1px;
  bottom: 1px;
  width: 16px;
  border: 1px solid;
  border-color: #f8f8f8 #696969 #696969 #f8f8f8;
  background: linear-gradient(#000, #000) 4px 5px / 7px 1px no-repeat, linear-gradient(#000, #000) 5px 6px / 5px 1px no-repeat, linear-gradient(#000, #000) 6px 7px / 3px 1px no-repeat, linear-gradient(#000, #000) 7px 8px / 1px 1px no-repeat, #f0f0f0;
  box-shadow: inset -1px -1px #a0a0a0;
  pointer-events: none;
}

/* workspace */
.work {
  display: grid;
  grid-template-columns: 302px 1fr;
  column-gap: 5px;
  flex: 1;
  min-height: 0;
  padding: 0 1px;
  font: 11px/13px "Liberation Sans", Arial, sans-serif;
}
.side { display: flex; flex-direction: column; min-width: 0; }
.sidebar-tools { display: flex; align-items: center; height: 31px; flex: none; padding-bottom: 4px; }
.grip1 { width: 3px; height: 20px; margin: 0 0 0 4px; border-left: 1px solid #a0a0a0; }
.tree {
  flex: 1;
  margin: 0;
  padding: 1px 8px;
  list-style: none;
  border: 1px solid;
  border-color: #a0a0a0 #fff #fff #a0a0a0;
  box-shadow: inset 1px 1px #696969, inset -1px -1px #e3e3e3;
  background: #fff;
}
.tree li { display: flex; align-items: center; height: 16px; }
.dots { width: 12px; height: 1px; border-top: 1px dotted #888; }
.tree svg { width: 16px; height: 14px; }
.tree span { margin-left: 3px; padding: 1px 2px; background: #f0f0f0; }
.grid {
  display: flex;
  flex-direction: column;
  min-width: 0;
  border-left: 1px solid #a0a0a0;
  background: #fff;
  box-shadow: -2px 0 #f0f0f0, -3px 0 #a0a0a0;
}
.grid-view { flex: 1; min-height: 0; overflow: hidden; border-top: 1px solid #808080; }
table { width: 1490px; table-layout: fixed; border-collapse: separate; border-spacing: 0; }
th, td { padding: 0; border: 1px solid #c0c0c0; border-width: 0 1px 1px 0; overflow: hidden; }
th {
  height: 16px;
  padding: 1px 0 0 2px;
  border-color: #808080;
  background: #f0f0f0;
  box-shadow: inset 1px 1px #fff;
  font-weight: normal;
  text-align: left;
  white-space: nowrap;
}
td { height: 28px; }
td.dark { border-color: #808080; }
td.mark { border-color: #808080; background: #f0f0f0; padding-left: 3px; }
.mark svg { display: block; width: 6px; height: 12px; }
td.code { background: #a0a0a0; }
td.name { background: #f0f0f0; }
.w12 { width: 12px; } .w35 { width: 35px; } .w43 { width: 43px; } .w63 { width: 63px; }
.w65 { width: 65px; } .w74 { width: 74px; } .w76 { width: 76px; } .w77 { width: 77px; }
.w80 { width: 80px; } .w82 { width: 82px; } .w83 { width: 83px; } .w91 { width: 91px; }
.w93 { width: 93px; } .w94 { width: 94px; } .w197 { width: 197px; }
.hscroll { display: flex; align-items: center; flex: none; height: 15px; background: #f0f0f0; }
.hscroll svg, .vscroll svg { width: 16px; height: 16px; fill: none; stroke: #555; stroke-width: 2; flex: none; }
.hscroll i { width: 17px; height: 15px; margin-left: 1px; background: #cdcdcd; }
.hscroll .end { margin-left: auto; }

/* status bar */
.status { display: flex; flex: none; height: 32px; margin: 2px 1px 0 0; }
.cell { flex: none; padding: 2px; border: 1px solid; border-color: #fff #a0a0a0 #a0a0a0 #fff; }
.cell span {
  display: flex;
  align-items: center;
  height: 100%;
  padding: 0 4px;
  border: 1px solid;
  border-color: #a0a0a0 #fff #fff #a0a0a0;
}
.cell svg { width: 16px; height: 16px; flex: none; }
.s1 { width: 90px; }
.s2 { width: 300px; }
.s3 { flex: 1; }
.s4 { width: 34px; }
.s4 span { justify-content: center; }

/* file dialog */
.dialog {
  position: absolute;
  left: 655px;
  top: 333px;
  width: 787px;
  border: 1px solid #6e6e6e;
  background: #f0f0f0;
  font: 11px/14px "Liberation Sans", Arial, sans-serif;
}
.dlg-title {
  display: flex;
  align-items: center;
  justify-content: space-between;
  height: 30px;
  padding: 0 9px 0 29px;
  background: #fff;
  font: 11px/16px "Open Sans", "Noto Sans", sans-serif;
}
.dlg-title svg { display: block; width: 12px; height: 12px; }
.dlg-folder { display: flex; align-items: center; height: 36px; }
.dlg-folder label { width: 122px; padding-right: 7px; text-align: right; }
.dlg-folder .combo, .dlg-form .combo { height: 21px; }
.folder { width: 260px; padding-left: 4px; }
.folder svg { width: 16px; height: 12px; margin-right: 2px; }
.dlg-tools { display: flex; margin-left: 12px; }
.dlg-tools .view { width: 32px; gap: 2px; }
.dlg-main { display: grid; grid-template-columns: 116px 1fr 16px; height: 319px; padding: 0 6px; }
.places { display: flex; flex-direction: column; width: 110px; }
.places button { display: flex; flex-direction: column; align-items: center; justify-content: space-between; height: 52px; padding: 6px 2px 2px 0; }
.places button.pressed { padding: 8px 0 0; }
.p-star { width: 32px; height: 26px; }
.p-screen { width: 28px; height: 20px; }
.p-lib { width: 28px; height: 24px; }
.p-pc { width: 32px; height: 28px; }
.p-net { width: 30px; height: 28px; }
.files { padding: 19px 23px; background: #fff; }
.file { display: flex; align-items: center; width: 220px; height: 50px; padding-left: 4px; background: #cce8ff; }
.file svg { width: 40px; height: 44px; margin-right: 11px; }
.file p { margin: 0; color: #808080; font: 11px/15px "Open Sans", "Noto Sans", sans-serif; white-space: nowrap; }
.file b { color: #000; font-weight: normal; }
.vscroll { display: flex; flex-direction: column; justify-content: space-between; background: #f0f0f0; }
.vscroll i { width: 15px; height: 174px; margin-top: 112px; background: #cdcdcd; }
.dlg-form {
  display: grid;
  grid-template-columns: 95px 1fr 93px;
  grid-template-rows: 24px 24px 14px;
  align-items: center;
  row-gap: 2px;
  padding: 9px 6px 20px 123px;
}
.dlg-form .btn { grid-column: 3; }
.dlg-form .combo { margin-right: 15px; }
.dlg-form .name-box { align-self: end; }
.dlg-form .name-box input { padding-left: 0; }
.btn {
  height: 23px;
  border: 1px solid;
  border-color: #fff #696969 #696969 #fff;
  box-shadow: inset -1px -1px #a0a0a0;
}
.btn.default { border-color: #696969; box-shadow: inset 1px 1px #fff, inset -1px -1px #696969, inset -2px -2px #a0a0a0; }
.check { grid-column: 2; display: flex; align-items: center; gap: 5px; }
.check input {
  width: 13px;
  height: 13px;
  margin: 0;
  appearance: none;
  border: 1px solid;
  border-color: #a0a0a0 #fff #fff #a0a0a0;
  box-shadow: inset 1px 1px #696969, inset -1px -1px #e3e3e3;
  background: #fff;
}
.resize { position: absolute; right: 0; bottom: 0; width: 12px; height: 12px; }
.marks { position: absolute; left: 0; top: 0; width: 786px; height: 482px; pointer-events: none; }
```
